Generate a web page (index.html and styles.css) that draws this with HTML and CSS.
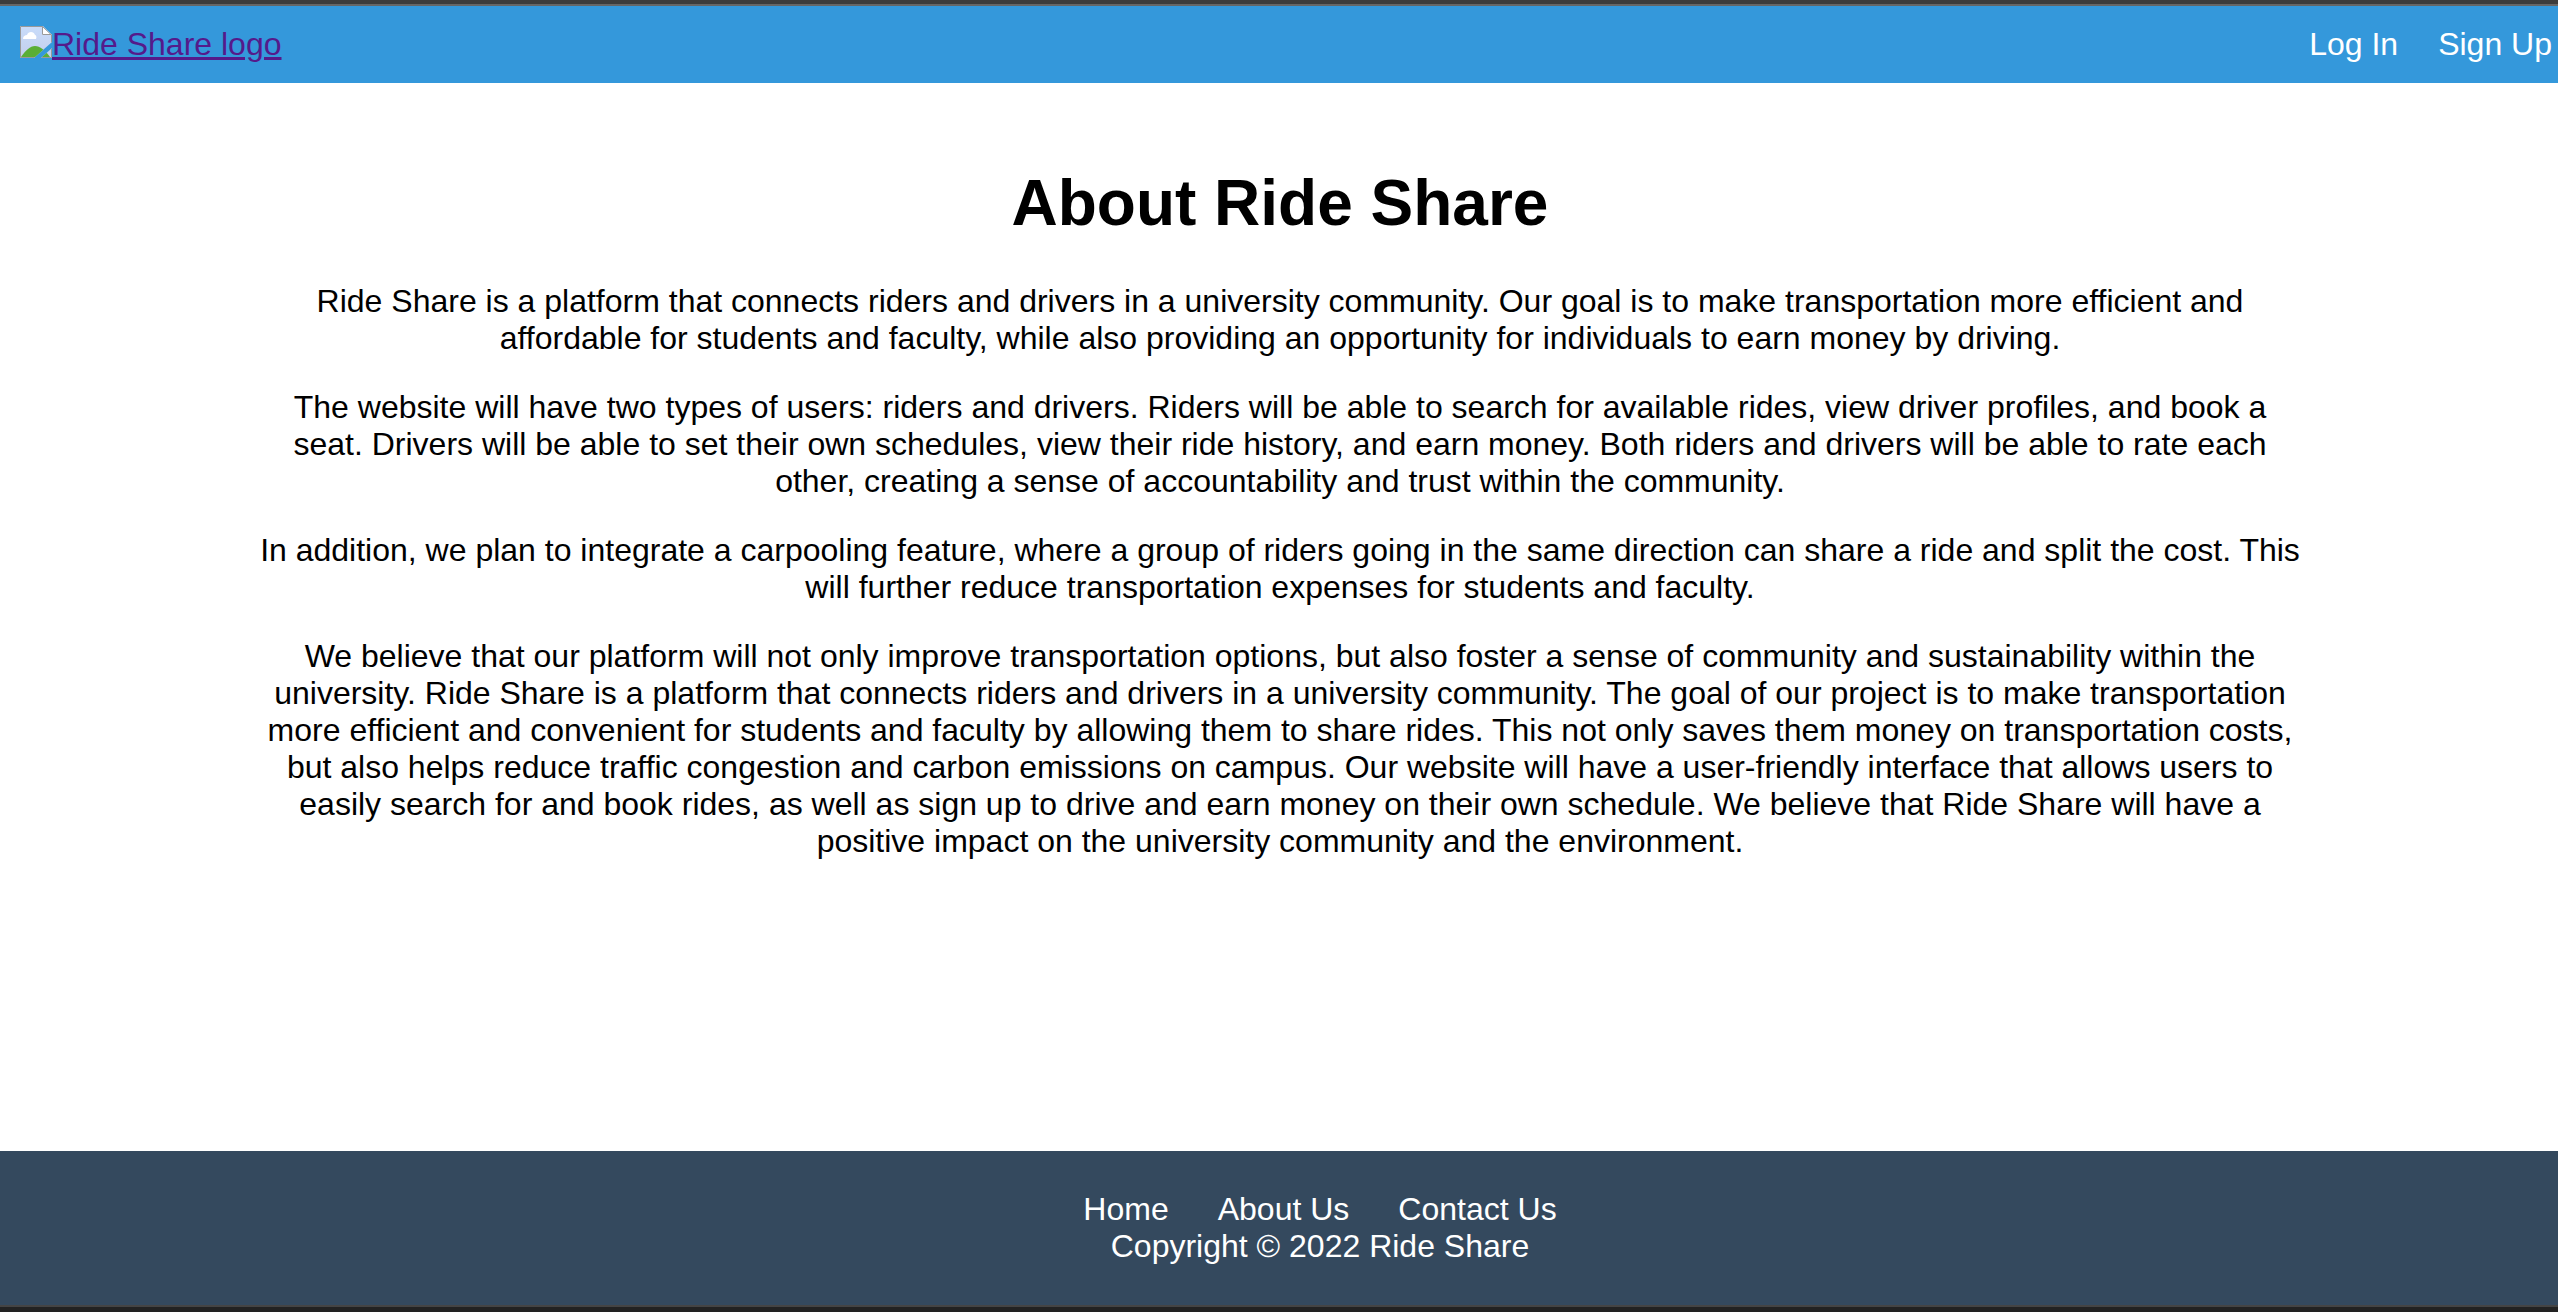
FILE: index.html
```html
<!DOCTYPE html>
<html lang="en">
<head>
<meta charset="utf-8">
<title>About Ride Share</title>
<link rel="stylesheet" href="styles.css">
</head>
<body>
<header class="site-header">
  <a class="logo" href="#home"><svg class="logo-icon" viewBox="0 0 32 32" aria-hidden="true">
    <defs>
      <linearGradient id="sky" x1="0" y1="0" x2="0" y2="1">
        <stop offset="0" stop-color="#c9dcfa"/>
        <stop offset="1" stop-color="#c3cfec"/>
      </linearGradient>
      <clipPath id="torn"><path d="M0 0h32v16L14 32H0zM32 22v10H21z"/></clipPath>
    </defs>
    <g clip-path="url(#torn)">
      <path d="M0 0h23l9 9v23H0z" fill="url(#sky)"/>
      <path d="M1 31c5-7 9-11 14-11s10 4 15 11z" fill="#5aae35"/>
      <path d="M3 13c0-3 2-4 4-4 1-4 7-4 8 0 1 0 2 2 1 4z" fill="#fff"/>
      <path d="M22 0v9h10z" fill="#fff"/>
      <path d="M0.500 0.500H22.500L31.500 9V31.500H0.500ZM22.500 0.500V8.500H31.500" fill="none" stroke="#999"/>
    </g>
  </svg>Ride Share logo</a>
  <nav class="account-nav">
    <a href="#login">Log In</a>
    <a href="#signup">Sign Up</a>
  </nav>
</header>
<main class="about">
  <h1>About Ride Share</h1>
  <p>Ride Share is a platform that connects riders and drivers in a university community. Our goal is to make transportation more efficient and affordable for students and faculty, while also providing an opportunity for individuals to earn money by driving.</p>
  <p>The website will have two types of users: riders and drivers. Riders will be able to search for available rides, view driver profiles, and book a seat. Drivers will be able to set their own schedules, view their ride history, and earn money. Both riders and drivers will be able to rate each other, creating a sense of accountability and trust within the community.</p>
  <p>In addition, we plan to integrate a carpooling feature, where a group of riders going in the same direction can share a ride and split the cost. This will further reduce transportation expenses for students and faculty.</p>
  <p>We believe that our platform will not only improve transportation options, but also foster a sense of community and sustainability within the university. Ride Share is a platform that connects riders and drivers in a university community. The goal of our project is to make transportation more efficient and convenient for students and faculty by allowing them to share rides. This not only saves them money on transportation costs, but also helps reduce traffic congestion and carbon emissions on campus. Our website will have a user-friendly interface that allows users to easily search for and book rides, as well as sign up to drive and earn money on their own schedule. We believe that Ride Share will have a positive impact on the university community and the environment.</p>
</main>
<footer class="site-footer">
  <nav class="footer-nav">
    <a href="#home">Home</a>
    <a href="#about">About Us</a>
    <a href="#contact">Contact Us</a>
  </nav>
  <p>Copyright © 2022 Ride Share</p>
</footer>
</body>
</html>
```
FILE: styles.css
```css
* { box-sizing: border-box; }
body {
  margin: 0;
  min-height: 100vh;
  display: flex;
  flex-direction: column;
  border-top: 4px solid #3c3c3c;
  border-bottom: 5px solid #222;
  font: 32px/37px "Liberation Sans", Arial, sans-serif;
  color: #000;
  background: #fff;
}
.site-header {
  display: flex;
  justify-content: space-between;
  align-items: center;
  padding: 20px 6px 20px 20px;
  border-top: 2px solid #666;
  background: #3498db;
}
.logo {
  display: flex;
  color: #551a8b;
  text-decoration-thickness: 3px;
}
.logo-icon { width: 32px; height: 32px; }
.account-nav { display: flex; gap: 40px; }
.account-nav a, .footer-nav a { color: #fff; text-decoration: none; }
.about {
  flex: 1;
  width: 80%;
  margin: 0 auto;
  padding: 83px 0 80px 2px;
  text-align: center;
}
.about h1 { margin: 0 0 43px; font-size: 64px; line-height: 74px; }
.about p { margin: 0 0 32px; }
.site-footer {
  padding: 40px 0 40px 82px;
  border-bottom: 2px solid #444;
  background: #34495e;
  color: #fff;
  text-align: center;
}
.footer-nav { display: flex; justify-content: center; gap: 49px; }
.site-footer p { margin: 0; }
```
